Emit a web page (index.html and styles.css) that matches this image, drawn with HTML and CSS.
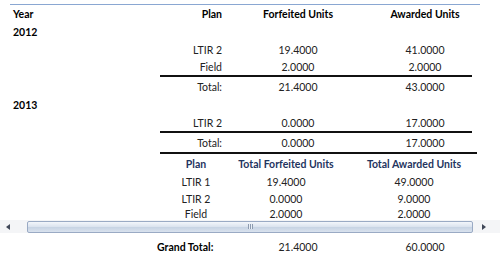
FILE: index.html
```html
<!DOCTYPE html>
<html>
<head>
<meta charset="utf-8">
<link rel="stylesheet" href="styles.css">
</head>
<body>
<div class="top-rule"></div>
<div class="viewport">
  <div class="report">
    <div class="row head">
      <div class="c1 b">Year</div>
      <div class="c2 b">Plan</div>
      <div class="c3 b">Forfeited Units</div>
      <div class="c4 b">Awarded Units</div>
    </div>
    <div class="row year">
      <div class="c1 b">2012</div>
    </div>
    <div class="row item">
      <div class="c1"></div>
      <div class="c2">LTIR 2</div>
      <div class="c3">19.4000</div>
      <div class="c4">41.0000</div>
    </div>
    <div class="row item">
      <div class="c1"></div>
      <div class="c2">Field</div>
      <div class="c3">2.0000</div>
      <div class="c4">2.0000</div>
    </div>
    <div class="rule"></div>
    <div class="row total">
      <div class="c1"></div>
      <div class="c2">Total:</div>
      <div class="c3">21.4000</div>
      <div class="c4">43.0000</div>
    </div>
    <div class="row year">
      <div class="c1 b">2013</div>
    </div>
    <div class="row item">
      <div class="c1"></div>
      <div class="c2">LTIR 2</div>
      <div class="c3">0.0000</div>
      <div class="c4">17.0000</div>
    </div>
    <div class="rule"></div>
    <div class="row total">
      <div class="c1"></div>
      <div class="c2">Total:</div>
      <div class="c3">0.0000</div>
      <div class="c4">17.0000</div>
    </div>
    <div class="rule rule-wide"></div>
    <div class="srow shead">
      <div class="s1"></div>
      <div class="s2 b">Plan</div>
      <div class="s3 b">Total Forfeited Units</div>
      <div class="s4 b">Total Awarded Units</div>
    </div>
    <div class="srow sitem first">
      <div class="s1"></div>
      <div class="s2">LTIR 1</div>
      <div class="s3">19.4000</div>
      <div class="s4">49.0000</div>
    </div>
    <div class="srow sitem">
      <div class="s1"></div>
      <div class="s2">LTIR 2</div>
      <div class="s3">0.0000</div>
      <div class="s4">9.0000</div>
    </div>
    <div class="srow sitem">
      <div class="s1"></div>
      <div class="s2">Field</div>
      <div class="s3">2.0000</div>
      <div class="s4">2.0000</div>
    </div>
  </div>
</div>
<div class="hscroll">
  <div class="arrow-box"><span class="tri tri-left"></span></div>
  <div class="thumb"><span class="grip"></span></div>
  <div class="arrow-box"><span class="tri tri-right"></span></div>
</div>
<div class="row grand">
  <div class="c1"></div>
  <div class="c2 b gl">Grand Total:</div>
  <div class="c3">21.4000</div>
  <div class="c4">60.0000</div>
</div>
</body>
</html>
```
FILE: styles.css
```css
html, body {
  margin: 0;
  padding: 0;
  background: #ffffff;
}
body {
  font-family: Lato, "Liberation Sans", sans-serif;
  font-size: 10.5px;
  color: #222222;
  width: 500px;
  height: 273px;
  overflow: hidden;
}
.top-rule {
  margin: 4px 0 0 10px;
  width: 470px;
  height: 1px;
  background: #8aa7d2;
}
.viewport {
  height: 215px;
  overflow: hidden;
}
.report {
  display: flex;
  flex-direction: column;
}
.row {
  display: grid;
  grid-template-columns: 147px 69px 144px 110px;
  padding-left: 10px;
  align-items: center;
}
.b { font-weight: bold; color: #000; }
.c1 { text-align: left; padding-left: 3px; }
.c2 { text-align: right; padding-right: 4px; }
.c3 { text-align: center; }
.c4 { text-align: center; }
.head { height: 18px; }
.year { height: 18px; }
.item { height: 17px; }
.total { height: 19px; }
.rule {
  height: 2px;
  background: #111;
  margin-left: 160px;
  width: 312px;
}
.rule-wide {
  width: 317px;
}
.srow {
  display: grid;
  grid-template-columns: 160px 72px 108px 148px;
  align-items: center;
}
.s2, .s3, .s4 { text-align: center; }
.shead { height: 19px; }
.shead .b { color: #1f3560; }
.sitem { height: 15px; }
.sitem.first { height: 18px; }

.hscroll {
  display: flex;
  align-items: center;
  height: 13px;
  background: #f4f5f7;
}
.arrow-box {
  width: 27px;
  height: 13px;
  display: flex;
  align-items: center;
  justify-content: flex-start;
  padding-left: 6px;
  box-sizing: border-box;
}
.arrow-box:last-child {
  padding-left: 9px;
}
.tri {
  width: 0;
  height: 0;
  border-top: 3px solid transparent;
  border-bottom: 3px solid transparent;
}
.tri-left { border-right: 4px solid #404858; }
.tri-right { border-left: 4px solid #404858; }
.thumb {
  flex: 1;
  height: 12px;
  box-sizing: border-box;
  border: 1px solid #9aaac4;
  border-radius: 2px;
  background: linear-gradient(#f3f6fb 0%, #dce4ef 45%, #c8d4e4 55%, #d9e2ee 100%);
  display: flex;
  align-items: center;
  justify-content: center;
}
.grip {
  width: 5px;
  height: 5px;
  background: repeating-linear-gradient(90deg, #8d9bb0 0 1px, #e8eef6 1px 2px);
}
.grand {
  margin-top: 5px;
  height: 18px;
}
.gl { text-align: left; padding-left: 0; padding-right: 0; }
```
